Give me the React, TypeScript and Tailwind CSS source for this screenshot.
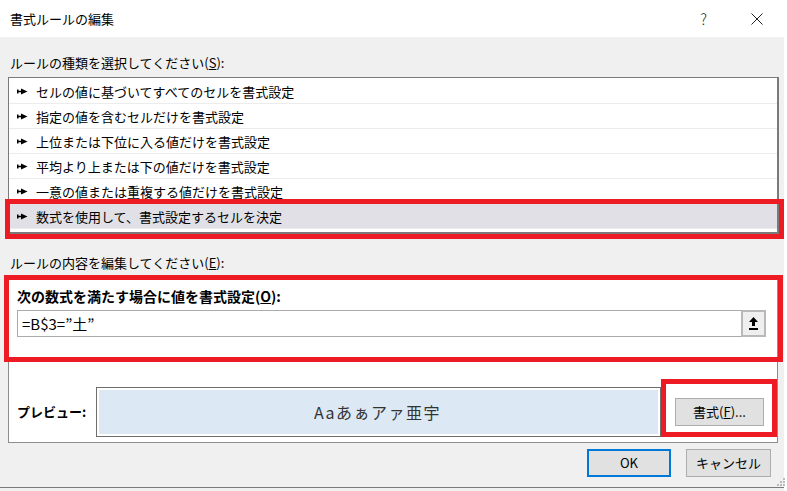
import React from "react";

const items = [
  "セルの値に基づいてすべてのセルを書式設定",
  "指定の値を含むセルだけを書式設定",
  "上位または下位に入る値だけを書式設定",
  "平均より上または下の値だけを書式設定",
  "一意の値または重複する値だけを書式設定",
  "数式を使用して、書式設定するセルを決定",
];

function Pointer() {
  return (
    <svg width="11" height="7" viewBox="0 0 11 7" className="shrink-0">
      <path d="M0 1.5h1.5v4H0z M1.5 2.8h3v1.4h-3z M4 0.5L10.5 3.5L4 6.5z" fill="#000" />
    </svg>
  );
}

export default function App() {
  return (
    <div className="relative w-[787px] h-[491px] overflow-hidden bg-white text-black font-['Noto_Sans_CJK_JP','Noto_Sans',sans-serif] text-[13px] leading-[18px]">
      {/* Title bar */}
      <div className="h-[37px] flex items-center pl-[10px]">
        <span className="text-[13px]">書式ルールの編集</span>
        <span className="ml-auto text-[15px] font-light text-[#222] mr-[44px]">?</span>
        <svg width="12" height="12" viewBox="0 0 12 12" className="mr-[24px]">
          <path d="M0.5 0.5L11.5 11.5M11.5 0.5L0.5 11.5" stroke="#222" strokeWidth="1" />
        </svg>
      </div>

      {/* Body */}
      <div className="flex h-[454px]">
        <div className="w-[784px] h-full bg-[#f0f0f0] pl-[8px] pr-[6px] flex flex-col">
          <div className="pt-[17px] pl-[2px]">
            ルールの種類を選択してください(<span className="underline">S</span>):
          </div>
          <div className="mt-[5px] h-[157px] w-[771px] bg-white border border-[#7a7a7a] border-r-2 border-b-2 pt-[1px] overflow-hidden">
            {items.map((t, i) => (
              <div
                key={t}
                className={
                  "h-[25px] flex items-center pl-[8px] border-b border-[#ececec] " +
                  (i === 5 ? "bg-[#e0e0e6]" : "")
                }
              >
                <Pointer />
                <span className="ml-[8px] pt-[1px]">{t}</span>
              </div>
            ))}
          </div>
          <div className="mt-[20px] pl-[2px]">
            ルールの内容を編集してください(<span className="underline">E</span>):
          </div>
          <div className="mt-[6px] h-[165px] w-[770px] bg-white border border-[#8d8d8d] flex flex-col pl-[8px] pr-[11px]">
            <div className="pt-[8px] font-bold text-[14px] leading-[18px]">
              次の数式を満たす場合に値を書式設定(<span className="underline">O</span>):
            </div>
            <div className="mt-[5px] h-[27px] flex">
              <div className="flex-1 border border-[#ababab] border-r-0 flex items-center pl-[4px] text-[15px]">
                =B$3=”土”
              </div>
              <div className="w-[25px] h-[27px] border-2 border-[#b9b9b9] bg-[#efefef] flex items-center justify-center">
                <svg width="11" height="13" viewBox="0 0 11 13">
                  <path d="M5.5 0L10 5H7v4H4V5H1z" fill="#000" />
                  <rect x="1" y="11" width="9" height="2" fill="#000" />
                </svg>
              </div>
            </div>
            <div className="mt-[50px] flex items-center">
              <div className="w-[79px] font-bold">プレビュー:</div>
              <div className="w-[565px] h-[50px] border border-[#6e6e6e] p-[2px] bg-white">
                <div className="w-full h-full bg-[#dce9f5] flex items-center justify-center text-[16px] tracking-[1.5px] text-[#333] pr-[2px]">
                  Aaあぁアァ亜宇
                </div>
              </div>
              <button className="ml-[14px] w-[89px] h-[28px] border border-[#adadad] bg-[#e1e1e1] flex items-center justify-center text-[13px]">
                書式(<span className="underline">F</span>)...
              </button>
            </div>
          </div>
          <div className="mt-[6px] flex justify-end pr-[7px] gap-[15px]">
            <button className="w-[84px] h-[28px] border-2 border-[#0078d7] bg-[#e1e1e1] flex items-center justify-center">
              OK
            </button>
            <button className="w-[85px] h-[28px] border border-[#adadad] bg-[#e1e1e1] flex items-center justify-center">
              キャンセル
            </button>
          </div>
          <div className="mt-auto h-[1px] bg-[#7a7a7a] -ml-[8px] -mr-[6px] mb-[3px]" />
        </div>
        <div className="w-[3px] h-full bg-white" />
      </div>

      {/* resize grip */}
      <svg width="10" height="10" viewBox="0 0 10 10" className="absolute left-[776px] top-[477px]">
        <rect x="7" y="1" width="2" height="2" fill="#bcbcbc" />
        <rect x="4" y="4" width="2" height="2" fill="#bcbcbc" />
        <rect x="7" y="4" width="2" height="2" fill="#bcbcbc" />
        <rect x="1" y="7" width="2" height="2" fill="#bcbcbc" />
        <rect x="4" y="7" width="2" height="2" fill="#bcbcbc" />
        <rect x="7" y="7" width="2" height="2" fill="#bcbcbc" />
      </svg>

      {/* red annotation boxes */}
      <div className="absolute left-[5px] top-[199px] w-[779px] h-[40px] border-[5px] border-[#ed1c24] pointer-events-none" />
      <div className="absolute left-[4px] top-[275px] w-[779px] h-[87px] border-[5px] border-[#ed1c24] pointer-events-none" />
      <div className="absolute left-[661px] top-[379px] w-[116px] h-[58px] border-[5px] border-[#ed1c24] pointer-events-none" />
    </div>
  );
}
